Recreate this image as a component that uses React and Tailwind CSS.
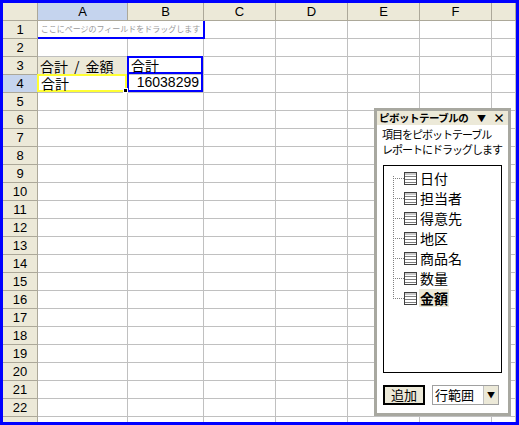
import React from 'react';

const cols = [
  { key: 'A', w: 'w-[90px]' },
  { key: 'B', w: 'w-[76px]' },
  { key: 'C', w: 'w-[72px]' },
  { key: 'D', w: 'w-[72px]' },
  { key: 'E', w: 'w-[72px]' },
  { key: 'F', w: 'w-[72px]' },
  { key: 'G', w: 'flex-1' },
];

const rows = Array.from({ length: 23 }, (_, i) => i + 1);

const fields = ['日付', '担当者', '得意先', '地区', '商品名', '数量', '金額'];

const FieldIcon = () => (
  <svg width="13" height="13" viewBox="0 0 13 13" className="shrink-0">
    <rect x="0.5" y="0.5" width="12" height="12" fill="#fff" stroke="#404040" />
    <rect x="1" y="1" width="11" height="2" fill="#c8c8c8" />
    <line x1="1" y1="4.5" x2="12" y2="4.5" stroke="#808080" />
    <line x1="1" y1="7.5" x2="12" y2="7.5" stroke="#808080" />
    <line x1="1" y1="10.5" x2="12" y2="10.5" stroke="#808080" />
  </svg>
);

const cellContent = (r, c) => {
  if (r === 1 && c === 'A') {
    return (
      <div className="absolute left-0 top-0 h-[18px] w-[167px] border-b-2 border-r-2 border-[#0000ff] bg-white flex items-center justify-center z-10">
        <span className="text-[8px] leading-none text-[#9a9a9a] whitespace-nowrap">ここにページのフィールドをドラッグします</span>
      </div>
    );
  }
  if (r === 3 && c === 'A') {
    return (
      <div className="absolute inset-0 bg-[#ece9d8] flex items-center pl-[2px] text-[14px] leading-none whitespace-nowrap">
        合計<span className="mx-[6px]">/</span>金額
      </div>
    );
  }
  if (r === 3 && c === 'B') {
    return (
      <div className="absolute -left-[1px] -top-[1px] right-0 bottom-0 border-2 border-[#0000ff] flex items-center pl-[2px] text-[14px] leading-none z-10">
        合計
      </div>
    );
  }
  if (r === 4 && c === 'A') {
    return (
      <div className="absolute -left-[1px] -top-[1px] right-0 bottom-0 border-2 border-[#ffff33] flex items-center pl-[2px] text-[14px] leading-none z-20">
        合計
        <div className="absolute -right-[3px] -bottom-[3px] w-[5px] h-[5px] bg-black border border-white"></div>
      </div>
    );
  }
  if (r === 4 && c === 'B') {
    return (
      <div className="absolute -left-[1px] -top-[1px] right-0 bottom-0 border-2 border-t-0 border-[#0000ff] flex items-center justify-end pr-[2px] text-[14px] leading-none z-10 font-['Liberation_Sans',sans-serif]">
        16038299
      </div>
    );
  }
  return null;
};

const App = () => {
  return (
    <div className="relative w-[519px] h-[425px] overflow-hidden bg-white border-[3px] border-[#0000ff] font-['Noto_Sans_CJK_JP',sans-serif] text-black">
      {/* column headers */}
      <div className="flex h-[18px]">
        <div className="w-[35px] shrink-0 bg-[#ece9d8] border-r border-b border-[#aca899]"></div>
        {cols.map((c) => (
          <div
            key={c.key}
            className={`${c.w} shrink-0 flex items-center justify-center text-[13px] font-['Liberation_Sans',sans-serif] border-r border-b border-[#aca899] ${c.key === 'A' ? 'bg-[#c5d4ee]' : 'bg-[#ece9d8]'}`}
          >
            {c.key === 'G' ? '' : c.key}
          </div>
        ))}
      </div>

      {/* rows */}
      {rows.map((r) => (
        <div key={r} className="flex h-[18px]">
          <div
            className={`w-[35px] shrink-0 flex items-center justify-center text-[13px] font-['Liberation_Sans',sans-serif] border-r border-b border-[#aca899] ${r === 4 ? 'bg-[#c5d4ee]' : 'bg-[#ece9d8]'}`}
          >
            {r < 23 ? r : ''}
          </div>
          {cols.map((c) => (
            <div key={c.key} className={`${c.w} shrink-0 relative border-r border-b border-[#c0c0c0]`}>
              {cellContent(r, c.key)}
            </div>
          ))}
        </div>
      ))}

      {/* pivot table field list */}
      <div className="absolute left-[371px] top-[105px] w-[137px] h-[308px] bg-white border-[3px] border-[#a8a8a0] flex flex-col z-30">
        <div className="h-[14px] bg-[#ece9d8] flex items-center pl-[2px] pr-[3px]">
          <span className="text-[10.5px] font-bold tracking-[-0.5px] whitespace-nowrap leading-none">ピボットテーブルの</span>
          <span className="ml-auto text-[9px] leading-none">▼</span>
          <span className="ml-[7px] text-[12px] font-bold leading-none">×</span>
        </div>
        <div className="px-[5px] pt-[2px] text-[11px] leading-[15px] tracking-[-1px] whitespace-nowrap">
          <div>項目をピボットテーブル</div>
          <div>レポートにドラッグします</div>
        </div>
        <div className="mx-[6px] mt-[8px] h-[208px] border border-black relative pt-[2px]">
          <div className="absolute left-[9px] top-[10px] h-[121px] border-l border-dotted border-[#808080]"></div>
          {fields.map((f, i) => (
            <div key={f} className="flex items-center h-[20px] pl-[9px]">
              <div className="w-[11px] border-t border-dotted border-[#808080]"></div>
              <FieldIcon />
              <span
                className={`ml-[2px] text-[14px] leading-[18px] px-[1px] whitespace-nowrap ${i === fields.length - 1 ? 'font-bold bg-[#ece9d8]' : ''}`}
              >
                {f}
              </span>
            </div>
          ))}
        </div>
        <div className="flex items-center mt-[12px] px-[6px] gap-[7px]">
          <div className="w-[42px] h-[20px] border-2 border-black bg-[#ece9d8] flex items-center justify-center text-[13px]">
            追加
          </div>
          <div className="w-[67px] h-[20px] border border-[#a0a0a0] flex items-center">
            <span className="pl-[2px] text-[13px] flex-1">行範囲</span>
            <div className="w-[15px] h-full bg-[#ece9d8] border-l border-[#c0c0c0] flex items-center justify-center text-[8px]">▼</div>
          </div>
        </div>
      </div>
    </div>
  );
};

export default App;
